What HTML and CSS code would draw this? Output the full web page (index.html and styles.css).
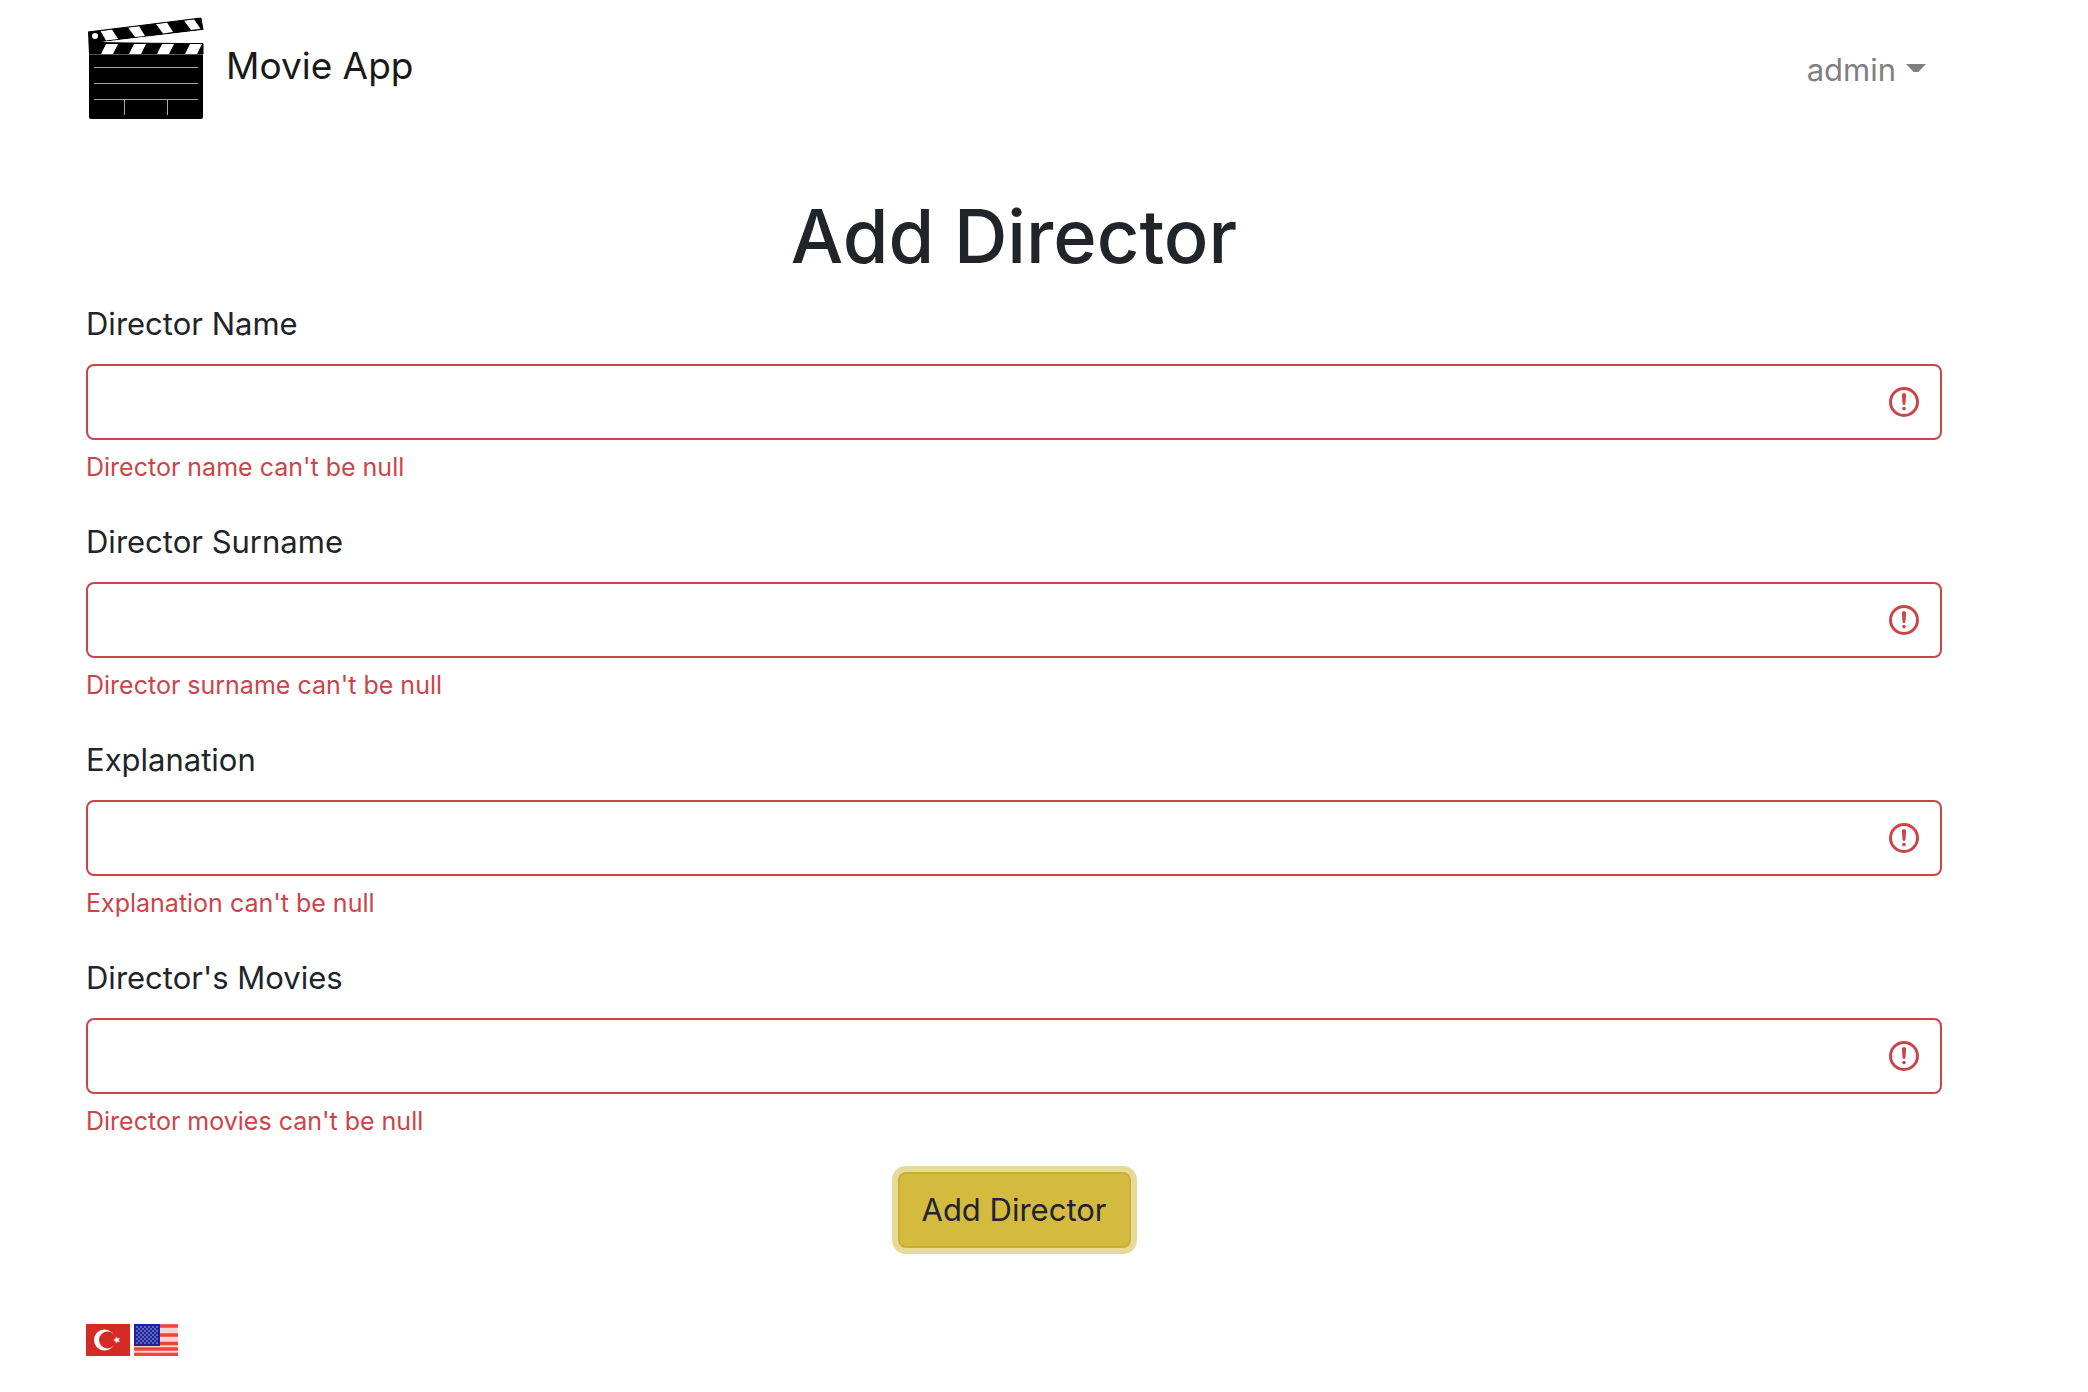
FILE: index.html
```html
<!DOCTYPE html>
<html lang="en">
<head>
<meta charset="utf-8">
<title>Movie App</title>
<link rel="stylesheet" href="styles.css">
</head>
<body>
<header class="navbar">
  <a class="brand" href="#">
    <svg class="brand-logo" viewBox="0 0 120 120" aria-hidden="true">
      <path d="M2 22 115 8 117 20 16 32 117 33V44H3Z" fill="#000"/>
      <path d="M16 32 117 20V33Z" fill="#fff"/>
      <g fill="#fff">
        <path d="M14.500 21 26 19.500 32 29 20 30.500Z"/>
        <path d="M42 17.500 53 16 59 26 49 27Z"/>
        <path d="M70 14 81 12.500 87 22 77 23.500Z"/>
        <path d="M98 10.500 108 9.300 114.500 18.700 105 20Z"/>
        <path d="M20 34H32L27 44H15Z"/>
        <path d="M48 34H60L55 44H43Z"/>
        <path d="M76 34H88L83 44H71Z"/>
        <path d="M104 34H116L111 44H99Z"/>
        <circle cx="9" cy="26" r="3"/>
      </g>
      <path d="M2 22 115 8 117 20M16 33.500H117V44" fill="none" stroke="#000"/>
      <path d="M3 44H117V107Q117 109 115 109H5Q3 109 3 107Z" fill="#000"/>
      <path d="M3 44.500H117" stroke="#555"/>
      <path d="M8 57.500H112M8 73.500H112M8 89.500H112M38.500 90V105M81.500 90V105" fill="none" stroke="#aaa"/>
    </svg>
    <span class="brand-name">Movie App</span>
  </a>
  <button class="user-menu" type="button" aria-haspopup="true">admin<span class="caret"></span></button>
</header>
<main>
  <h1>Add Director</h1>
  <form novalidate>
    <div class="form-group">
      <label for="name">Director Name</label>
      <input id="name" type="text" aria-describedby="name-error">
      <div class="feedback" id="name-error">Director name can't be null</div>
    </div>
    <div class="form-group">
      <label for="surname">Director Surname</label>
      <input id="surname" type="text" aria-describedby="surname-error">
      <div class="feedback" id="surname-error">Director surname can't be null</div>
    </div>
    <div class="form-group">
      <label for="explanation">Explanation</label>
      <input id="explanation" type="text" aria-describedby="explanation-error">
      <div class="feedback" id="explanation-error">Explanation can't be null</div>
    </div>
    <div class="form-group">
      <label for="movies">Director's Movies</label>
      <input id="movies" type="text" aria-describedby="movies-error">
      <div class="feedback" id="movies-error">Director movies can't be null</div>
    </div>
    <button class="submit" type="button">Add Director</button>
  </form>
</main>
<footer class="languages">
  <a href="#" aria-label="Türkçe">
    <svg class="flag" viewBox="0 0 44 32">
      <path d="M0 0H44V32H0Z" fill="#d52b27"/>
      <circle cx="18.500" cy="16" r="10.500" fill="#fff"/>
      <circle cx="21.500" cy="16" r="8.500" fill="#d52b27"/>
      <path d="M27 16 29.500 15 30 12.500 31.500 14.500 34 14 32.500 16 34 18 31.500 17.500 30 19.500 29.500 17Z" fill="#fff"/>
    </svg>
  </a>
  <a href="#" aria-label="English">
    <svg class="flag" viewBox="0 0 44 32">
      <defs>
        <pattern id="stars" width="4" height="4" patternUnits="userSpaceOnUse">
          <path d="M0 0H2V2H0ZM2 2H4V4H2Z" fill="#6468bb"/>
        </pattern>
      </defs>
      <path d="M0 0H44V32H0Z" fill="#fbd3d0"/>
      <path d="M0 2H44M0 11H44M0 19.500H44M0 25H44M0 30.500H44" stroke="#f0443a" stroke-width="3.500"/>
      <path d="M0 0H26V22H0Z" fill="#1a229c"/>
      <path d="M2 2H24V20H2Z" fill="url(#stars)"/>
    </svg>
  </a>
</footer>
</body>
</html>
```
FILE: styles.css
```css
* {
  box-sizing: border-box;
}

body {
  margin: 0;
  padding: 0 146px 0 86px;
  background: #fff;
  color: #212529;
  font-family: Inter, "Liberation Sans", sans-serif;
  font-size: 31px;
  line-height: 48px;
}

a {
  color: inherit;
  text-decoration: none;
}

button,
input {
  font: inherit;
}

.navbar {
  display: flex;
  align-items: center;
  justify-content: space-between;
  padding: 10px 16px 10px 0;
}

.brand {
  display: flex;
  align-items: center;
  gap: 20px;
  color: #191919;
  font-size: 37px;
}

.brand-logo {
  width: 120px;
  height: 120px;
}

.brand-name {
  padding-bottom: 8px;
}

.user-menu {
  display: flex;
  align-items: center;
  gap: 10px;
  padding: 0;
  border: 0;
  background: none;
  color: #808080;
}

.caret {
  width: 20px;
  height: 8px;
  margin-bottom: 4px;
  background: #808080;
  clip-path: polygon(0 0, 100% 0, 62% 100%, 38% 100%);
}

main {
  padding-top: 48px;
}

h1 {
  margin: 0 0 16px;
  font-size: 74px;
  font-weight: 500;
  line-height: 96px;
  text-align: center;
}

form {
  display: flex;
  flex-direction: column;
}

.form-group {
  margin-bottom: 32px;
}

.form-group label {
  display: block;
  margin-bottom: 16px;
}

.form-group input {
  display: block;
  width: 100%;
  height: 76px;
  padding: 12px 76px 12px 24px;
  border: 2px solid #cb444a;
  border-radius: 8px;
  outline: 0;
  background: #fff url("data:image/svg+xml,%3Csvg xmlns='http://www.w3.org/2000/svg' viewBox='0 0 12 12' fill='none' stroke='%23cb444a'%3E%3Ccircle cx='6' cy='6' r='4.5'/%3E%3Cpath stroke-linejoin='round' d='M5.8 3.600h.4L6 6.500z'/%3E%3Ccircle cx='6' cy='8.200' r='.6' fill='%23cb444a' stroke='none'/%3E%3C/svg%3E") no-repeat right 18px center / 36px 36px;
}

.feedback {
  margin-top: 8px;
  color: #cb444a;
  font-size: 25px;
  line-height: 38px;
}

.submit {
  align-self: center;
  height: 76px;
  padding: 0 22px;
  border: 2px solid #c6ae38;
  border-radius: 8px;
  background: #d4bb40;
  box-shadow: 0 0 0 6px #e5da96;
  color: #212529;
}

.languages {
  display: flex;
  gap: 4px;
  padding: 76px 0 32px;
}

.flag {
  display: block;
  width: 44px;
  height: 32px;
}
```
